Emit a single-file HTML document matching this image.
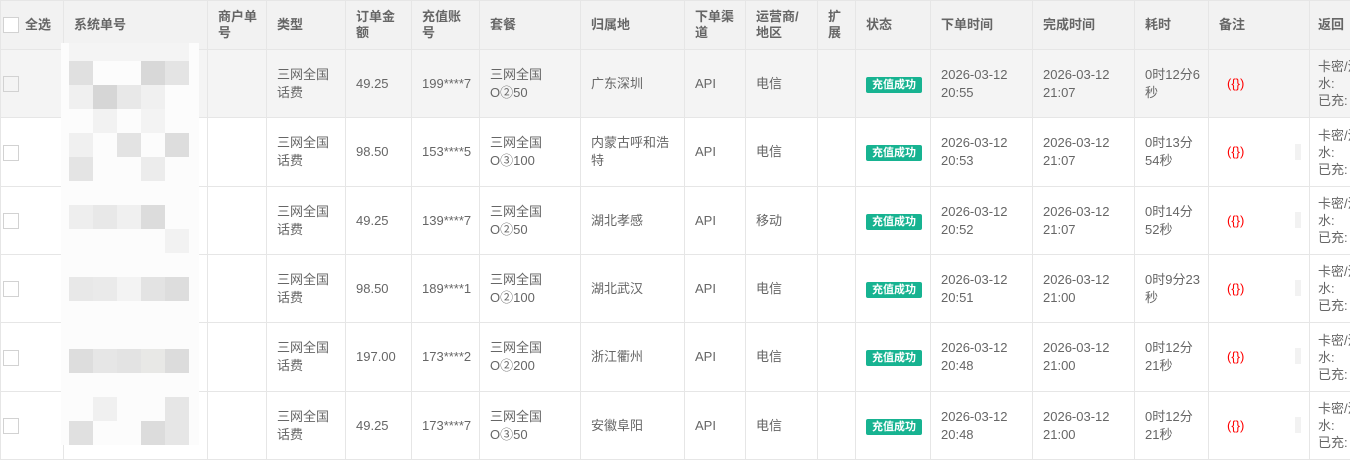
<!DOCTYPE html>
<html><head><meta charset="utf-8"><style>
html,body{margin:0;padding:0;background:#fff;width:1350px;height:464px;overflow:hidden}
body{font-family:"Liberation Sans","Noto Sans CJK SC",sans-serif;font-size:13px;color:#666;position:relative}
table{border-collapse:collapse;table-layout:fixed;position:absolute;left:0;top:0;width:1391px}
td,th{border:1px solid #e6e6e6;padding:0 4px 0 10px;line-height:18px;text-align:left;vertical-align:middle;overflow:visible;white-space:nowrap}
th{background:#f2f2f2;font-weight:bold;color:#666;height:49px;box-sizing:border-box;line-height:16px}
tr.hov td{background:#f4f4f4}
.cb{display:inline-block;width:16px;height:16px;border:1px solid #d2d2d2;background:#fff;vertical-align:middle;box-sizing:border-box}
tr.hov .cb{background:#f4f4f4}
.bd{display:inline-block;background:#17b391;color:#fff;font-size:11px;font-weight:bold;line-height:16px;padding:0 6px;border-radius:2px;white-space:nowrap}
.rm{color:#f00;padding-left:18px}
.ret{white-space:nowrap;padding-left:8px;line-height:17px}
.gb{position:absolute;width:6px;height:16px;background:#f2f2f2}
tr.a td{height:67px} tr.b td{height:68px}
</style></head><body>
<table>
<colgroup><col style="width:63px"><col style="width:144px"><col style="width:59px"><col style="width:79px"><col style="width:66px"><col style="width:68px"><col style="width:101px"><col style="width:104px"><col style="width:61px"><col style="width:72px"><col style="width:38px"><col style="width:75px"><col style="width:102px"><col style="width:102px"><col style="width:74px"><col style="width:101px"><col style="width:82px"></colgroup>
<tr><th style="padding-left:2px"><span class="cb" style="margin-right:6px"></span>全选</th><th>系统单号</th><th>商户单<br>号</th><th>类型</th><th>订单金<br>额</th><th>充值账<br>号</th><th>套餐</th><th>归属地</th><th>下单渠<br>道</th><th>运营商/<br>地区</th><th>扩<br>展</th><th>状态</th><th>下单时间</th><th>完成时间</th><th>耗时</th><th>备注</th><th style="padding-left:8px">返回</th></tr>
<tr class="hov a"><td style="padding-left:2px"><span class="cb"></span></td><td></td><td></td><td>三网全国<br>话费</td><td>49.25</td><td>199****7</td><td>三网全国<br>O②50</td><td>广东深圳</td><td>API</td><td>电信</td><td></td><td><span class="bd">充值成功</span></td><td>2026-03-12<br>20:55</td><td>2026-03-12<br>21:07</td><td>0时12分6<br>秒</td><td class="rm">({})</td><td class="ret">卡密/流<br>水:<br>已充:</td></tr>
<tr class="b"><td style="padding-left:2px"><span class="cb"></span></td><td></td><td></td><td>三网全国<br>话费</td><td>98.50</td><td>153****5</td><td>三网全国<br>O③100</td><td>内蒙古呼和浩<br>特</td><td>API</td><td>电信</td><td></td><td><span class="bd">充值成功</span></td><td>2026-03-12<br>20:53</td><td>2026-03-12<br>21:07</td><td>0时13分<br>54秒</td><td class="rm">({})</td><td class="ret">卡密/流<br>水:<br>已充:</td></tr>
<tr class="a"><td style="padding-left:2px"><span class="cb"></span></td><td></td><td></td><td>三网全国<br>话费</td><td>49.25</td><td>139****7</td><td>三网全国<br>O②50</td><td>湖北孝感</td><td>API</td><td>移动</td><td></td><td><span class="bd">充值成功</span></td><td>2026-03-12<br>20:52</td><td>2026-03-12<br>21:07</td><td>0时14分<br>52秒</td><td class="rm">({})</td><td class="ret">卡密/流<br>水:<br>已充:</td></tr>
<tr class="a"><td style="padding-left:2px"><span class="cb"></span></td><td></td><td></td><td>三网全国<br>话费</td><td>98.50</td><td>189****1</td><td>三网全国<br>O②100</td><td>湖北武汉</td><td>API</td><td>电信</td><td></td><td><span class="bd">充值成功</span></td><td>2026-03-12<br>20:51</td><td>2026-03-12<br>21:00</td><td>0时9分23<br>秒</td><td class="rm">({})</td><td class="ret">卡密/流<br>水:<br>已充:</td></tr>
<tr class="b"><td style="padding-left:2px"><span class="cb"></span></td><td></td><td></td><td>三网全国<br>话费</td><td>197.00</td><td>173****2</td><td>三网全国<br>O②200</td><td>浙江衢州</td><td>API</td><td>电信</td><td></td><td><span class="bd">充值成功</span></td><td>2026-03-12<br>20:48</td><td>2026-03-12<br>21:00</td><td>0时12分<br>21秒</td><td class="rm">({})</td><td class="ret">卡密/流<br>水:<br>已充:</td></tr>
<tr class="a"><td style="padding-left:2px"><span class="cb"></span></td><td></td><td></td><td>三网全国<br>话费</td><td>49.25</td><td>173****7</td><td>三网全国<br>O③50</td><td>安徽阜阳</td><td>API</td><td>电信</td><td></td><td><span class="bd">充值成功</span></td><td>2026-03-12<br>20:48</td><td>2026-03-12<br>21:00</td><td>0时12分<br>21秒</td><td class="rm">({})</td><td class="ret">卡密/流<br>水:<br>已充:</td></tr>
</table>
<div class="gb" style="left:1295px;top:144px"></div>
<div class="gb" style="left:1295px;top:212px"></div>
<div class="gb" style="left:1295px;top:280px"></div>
<div class="gb" style="left:1295px;top:348px"></div>
<div class="gb" style="left:1295px;top:417px"></div>
<svg style="position:absolute;left:61px;top:43px" width="138" height="402">
<rect x="0" y="0" width="138" height="402" fill="#fcfcfc"/>
<rect x="8" y="0" width="120" height="18" fill="#f4f4f4"/>
<g transform="translate(-61,-43)">
<rect x="69" y="61" width="24" height="24" fill="#e0e0e0"/><rect x="141" y="61" width="24" height="24" fill="#d8d8d8"/><rect x="165" y="61" width="24" height="24" fill="#e4e4e4"/>
<rect x="69" y="85" width="24" height="24" fill="#f0f0f0"/><rect x="93" y="85" width="24" height="24" fill="#d6d6d6"/><rect x="117" y="85" width="24" height="24" fill="#e8e8e8"/><rect x="141" y="85" width="24" height="24" fill="#f0f0f0"/>
<rect x="93" y="109" width="24" height="24" fill="#f2f2f2"/><rect x="141" y="109" width="24" height="24" fill="#f3f3f3"/>
<rect x="69" y="133" width="24" height="24" fill="#f0f0f0"/><rect x="117" y="133" width="24" height="24" fill="#e3e3e3"/><rect x="165" y="133" width="24" height="24" fill="#dddddd"/>
<rect x="69" y="157" width="24" height="24" fill="#e4e4e4"/><rect x="141" y="157" width="24" height="24" fill="#ececec"/>
<rect x="69" y="205" width="24" height="24" fill="#eeeeee"/><rect x="93" y="205" width="24" height="24" fill="#e8e8e8"/><rect x="117" y="205" width="24" height="24" fill="#f0f0f0"/><rect x="141" y="205" width="24" height="24" fill="#dcdcdc"/>
<rect x="165" y="229" width="24" height="24" fill="#f2f2f2"/>
<rect x="69" y="277" width="24" height="24" fill="#e8e8e8"/><rect x="93" y="277" width="24" height="24" fill="#eaeaea"/><rect x="117" y="277" width="24" height="24" fill="#f3f3f3"/><rect x="141" y="277" width="24" height="24" fill="#e3e3e3"/><rect x="165" y="277" width="24" height="24" fill="#dddddd"/>
<rect x="69" y="349" width="24" height="24" fill="#dddddd"/><rect x="93" y="349" width="24" height="24" fill="#e6e6e6"/><rect x="117" y="349" width="24" height="24" fill="#e3e3e3"/><rect x="141" y="349" width="24" height="24" fill="#e8e8e6"/><rect x="165" y="349" width="24" height="24" fill="#dcdcdc"/>
<rect x="93" y="397" width="24" height="24" fill="#f0f0f0"/><rect x="165" y="397" width="24" height="24" fill="#e6e6e6"/>
<rect x="69" y="421" width="24" height="24" fill="#e0e0e0"/><rect x="141" y="421" width="24" height="24" fill="#dcdcdc"/><rect x="165" y="421" width="24" height="24" fill="#e6e6e6"/>
</g></svg>
</body></html>
